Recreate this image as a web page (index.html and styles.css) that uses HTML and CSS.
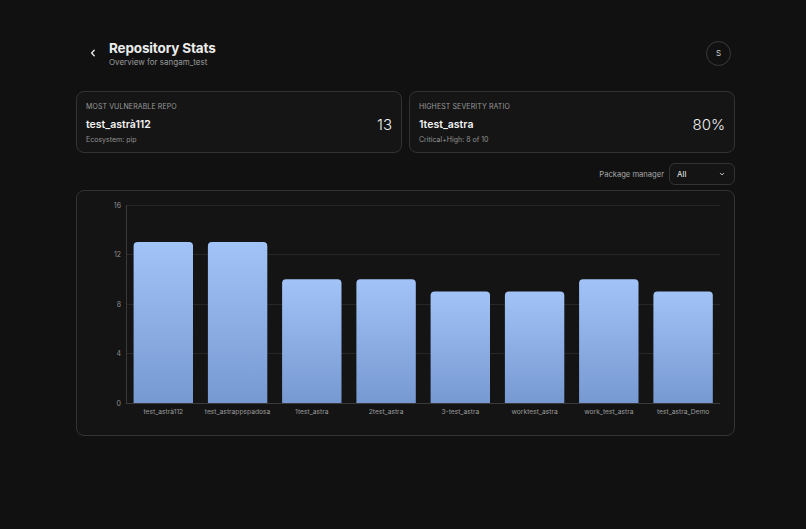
FILE: index.html
```html
<!DOCTYPE html>
<html>
<head>
<meta charset="utf-8">
<link rel="stylesheet" href="styles.css">
</head>
<body>
<div class="page">
  <header class="header">
    <div class="title-wrap">
      <button class="back" aria-label="Back">
        <svg width="10" height="10" viewBox="0 0 10 10"><path d="M6.2 2.2 L3.6 5 L6.2 7.8" fill="none" stroke="#e6e6e6" stroke-width="1.4" stroke-linecap="round" stroke-linejoin="round"/></svg>
      </button>
      <div>
        <h1 class="title">Repository Stats</h1>
        <p class="subtitle">Overview for sangam_test</p>
      </div>
    </div>
    <div class="avatar">S</div>
  </header>

  <section class="cards">
    <div class="card">
      <div class="card-label">MOST VULNERABLE REPO</div>
      <div class="card-row">
        <div class="card-name">test_astrà11̀2</div>
        <div class="card-value">13</div>
      </div>
      <div class="card-sub">Ecosystem: pip</div>
    </div>
    <div class="card">
      <div class="card-label">HIGHEST SEVERITY RATIO</div>
      <div class="card-row">
        <div class="card-name">1test_astra</div>
        <div class="card-value">80%</div>
      </div>
      <div class="card-sub">Critical+High: 8 of 10</div>
    </div>
  </section>

  <div class="filter">
    <span class="filter-label">Package manager</span>
    <div class="select">
      <span>All</span>
      <svg width="8" height="8" viewBox="0 0 8 8"><path d="M2.2 3.2 L4 4.9 L5.8 3.2" fill="none" stroke="#bdbdbd" stroke-width="1" stroke-linecap="round" stroke-linejoin="round"/></svg>
    </div>
  </div>

  <section class="chart-card">
    <svg class="chart" width="657" height="244" viewBox="0 0 657 244">
      <defs>
        <linearGradient id="bar" x1="0" y1="0" x2="0" y2="1">
          <stop offset="0" stop-color="#a2c3f7"/>
          <stop offset="1" stop-color="#7799d2"/>
        </linearGradient>
      </defs>
      <g stroke="#262626" stroke-width="1">
        <line x1="49" y1="14.5" x2="643" y2="14.5"/>
        <line x1="49" y1="63.5" x2="643" y2="63.5"/>
        <line x1="49" y1="113.5" x2="643" y2="113.5"/>
        <line x1="49" y1="162.5" x2="643" y2="162.5"/>
      </g>
      <g class="ytick" text-anchor="end">
        <text x="44" y="17">16</text>
        <text x="44" y="66">12</text>
        <text x="44" y="116">8</text>
        <text x="44" y="165">4</text>
        <text x="44" y="215">0</text>
      </g>
      <g fill="url(#bar)">
        <path d="M56.6 212 V55.1 a4 4 0 0 1 4 -4 H112 a4 4 0 0 1 4 4 V212 Z"/>
        <path d="M130.9 212 V55.1 a4 4 0 0 1 4 -4 H186.3 a4 4 0 0 1 4 4 V212 Z"/>
        <path d="M205.1 212 V92.3 a4 4 0 0 1 4 -4 H260.5 a4 4 0 0 1 4 4 V212 Z"/>
        <path d="M279.4 212 V92.3 a4 4 0 0 1 4 -4 H334.8 a4 4 0 0 1 4 4 V212 Z"/>
        <path d="M353.6 212 V104.6 a4 4 0 0 1 4 -4 H409 a4 4 0 0 1 4 4 V212 Z"/>
        <path d="M427.9 212 V104.6 a4 4 0 0 1 4 -4 H483.3 a4 4 0 0 1 4 4 V212 Z"/>
        <path d="M502.1 212 V92.3 a4 4 0 0 1 4 -4 H557.5 a4 4 0 0 1 4 4 V212 Z"/>
        <path d="M576.4 212 V104.6 a4 4 0 0 1 4 -4 H631.8 a4 4 0 0 1 4 4 V212 Z"/>
      </g>
      <g stroke="#3a3a3a" stroke-width="1">
        <line x1="49.5" y1="14" x2="49.5" y2="212"/>
        <line x1="49" y1="212.5" x2="643" y2="212.5"/>
      </g>
      <g class="xtick" text-anchor="middle">
        <text x="86.3" y="223">test_astrà11̀2</text>
        <text x="160.6" y="223">test_astrappspadosa</text>
        <text x="234.8" y="223">1test_astra</text>
        <text x="309.1" y="223">2test_astra</text>
        <text x="383.3" y="223">3-test_astra</text>
        <text x="457.6" y="223">worktest_astra</text>
        <text x="531.8" y="223">work_test_astra</text>
        <text x="606.1" y="223">test_astra_Demo</text>
      </g>
    </svg>
  </section>
</div>
</body>
</html>
```

FILE: styles.css
```css
* { box-sizing: border-box; }
html, body {
  margin: 0;
  padding: 0;
  background: #111111;
  color: #e8e8e8;
  font-family: "Inter", "Lato", "Liberation Sans", sans-serif;
}
.page {
  width: 659px;
  margin-left: 76px;
  padding-top: 40px;
}
.header {
  display: flex;
  justify-content: space-between;
  align-items: center;
  height: 26px;
  margin-bottom: 25px;
}
.title-wrap {
  display: flex;
  align-items: center;
  gap: 9px;
  padding-left: 10px;
}
.back {
  width: 14px;
  height: 14px;
  padding: 0;
  border: 0;
  background: transparent;
  display: flex;
  align-items: center;
  justify-content: center;
  margin-top: 0;
}
.title {
  margin: 0;
  font-size: 13.5px;
  font-weight: 700;
  letter-spacing: -0.15px;
  color: #ececec;
  line-height: 16px;
}
.subtitle {
  margin: 1px 0 0;
  font-size: 8px;
  color: #9a9a9a;
  line-height: 10px;
}
.avatar {
  width: 25px;
  height: 25px;
  border-radius: 50%;
  border: 1px solid #3a3a3a;
  display: flex;
  align-items: center;
  justify-content: center;
  font-size: 8px;
  color: #cfcfcf;
  margin-right: 4px;
}
.cards {
  display: grid;
  grid-template-columns: 1fr 1fr;
  gap: 7px;
}
.card {
  height: 62px;
  background: #151515;
  border: 1px solid #333333;
  border-radius: 8px;
  padding: 10px 9px 0 9px;
}
.card-label {
  font-size: 7px;
  color: #9a9a9a;
  line-height: 9px;
  letter-spacing: 0.1px;
}
.card-row {
  display: flex;
  justify-content: space-between;
  align-items: center;
  margin-top: 5px;
  height: 16px;
}
.card-name {
  font-size: 10.5px;
  font-weight: 600;
  color: #f2f2f2;
}
.card-value {
  font-size: 15px;
  font-weight: 300;
  color: #f0f0f0;
}
.card-sub {
  margin-top: 3px;
  font-size: 7px;
  color: #939393;
}
.filter {
  display: flex;
  justify-content: flex-end;
  align-items: center;
  gap: 5px;
  margin-top: 10px;
  margin-bottom: 5px;
}
.filter-label {
  font-size: 7.6px;
  color: #a8a8a8;
}
.select {
  width: 66px;
  height: 22px;
  border: 1px solid #333333;
  border-radius: 6px;
  background: #141414;
  display: flex;
  justify-content: space-between;
  align-items: center;
  padding: 0 8px 0 7px;
  font-size: 8px;
  color: #e8e8e8;
}
.chart-card {
  height: 246px;
  background: #141414;
  border: 1px solid #333333;
  border-radius: 8px;
}
.chart {
  display: block;
}
.ytick text {
  font-size: 7px;
  fill: #8e8e8e;
}
.xtick text {
  font-size: 6.7px;
  fill: #9a9a9a;
}
```
